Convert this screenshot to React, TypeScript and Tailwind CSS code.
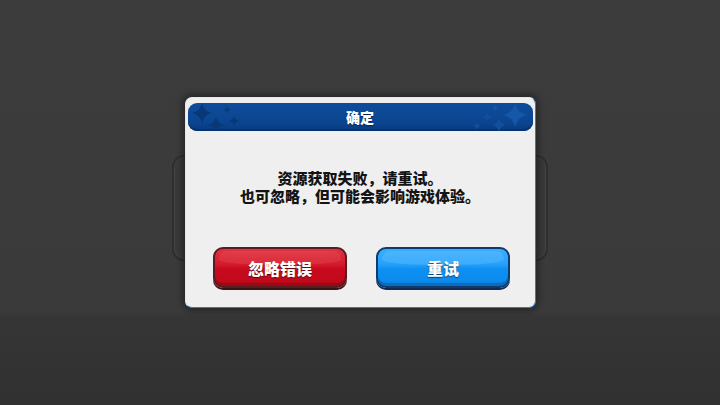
import React from 'react';

const cjk = { fontFamily: '"Noto Sans CJK SC", "Noto Sans", sans-serif' };

// four point sparkle used on the title bar
const Star: React.FC<{ x: number; y: number; r: number; fill: string }> = ({ x, y, r, fill }) => (
  <path
    d={`M${x} ${y - r} Q${x + r * 0.18} ${y - r * 0.18} ${x + r} ${y} Q${x + r * 0.18} ${y + r * 0.18} ${x} ${y + r} Q${x - r * 0.18} ${y + r * 0.18} ${x - r} ${y} Q${x - r * 0.18} ${y - r * 0.18} ${x} ${y - r}Z`}
    fill={fill}
  />
);

const TitleBar: React.FC = () => (
  <div className="relative h-[28px] rounded-[9px] bg-[linear-gradient(to_bottom,#0e4c9a_0%,#0b4590_70%,#073a7c_100%)] overflow-hidden flex items-center justify-center shadow-[inset_0_-2px_0_#06336e]">
    <svg className="absolute left-0 top-0" width="70" height="28" viewBox="0 0 70 28">
      <Star x={14} y={10} r={10} fill="#083876" />
      <Star x={28} y={22} r={8} fill="#083876" />
      <Star x={39} y={7} r={4} fill="#093b7d" />
      <Star x={46} y={18} r={5} fill="#083876" />
    </svg>
    <svg className="absolute right-0 top-0" width="70" height="28" viewBox="0 0 70 28">
      <Star x={52} y={12} r={12} fill="#1557a8" />
      <Star x={36} y={22} r={7} fill="#114e9c" />
      <Star x={24} y={14} r={5} fill="#114e9c" />
      <Star x={32} y={5} r={3} fill="#1557a8" />
      <Star x={14} y={23} r={4} fill="#114e9c" />
    </svg>
    <span className="relative text-[14px] font-black text-white leading-none [text-shadow:0_1px_1px_#02224f]" style={cjk}>
      确定
    </span>
  </div>
);

const GameButton: React.FC<{ label: string; tone: 'red' | 'blue' }> = ({ label, tone }) => {
  const skin =
    tone === 'red'
      ? 'border-[#5b1c20] bg-[linear-gradient(to_bottom,#df3442_0%,#d51c2c_40%,#c70a1e_55%,#c30a1c_85%,#a50716_100%)] shadow-[0_2px_0_#3b1215,inset_0_-3px_0_#9c0814]'
      : 'border-[#0e3b6e] bg-[linear-gradient(to_bottom,#3aaeff_0%,#26a2fb_40%,#0d90f2_55%,#0b8cef_85%,#0a74cc_100%)] shadow-[0_2px_0_#0c2c55,inset_0_-3px_0_#0a6bc0]';
  const glow = tone === 'red' ? 'bg-[#f0707a]/20' : 'bg-[#9ad6ff]/20';
  return (
    <div className={`relative w-[134px] h-[41px] rounded-[10px] border-2 flex items-center justify-center overflow-hidden ${skin}`}>
      <div className={`absolute left-[4px] right-[4px] top-[2px] h-[14px] rounded-t-[8px] rounded-b-[40%] ${glow}`} />
      <span className="relative text-[16px] font-black text-white leading-none [text-shadow:0_1px_1px_rgba(0,0,0,0.55)]" style={cjk}>
        {label}
      </span>
    </div>
  );
};

export default function App() {
  return (
    <div className="w-[720px] h-[405px] overflow-hidden grid place-items-center bg-[linear-gradient(to_bottom,#3c3c3c_0%,#3a3a3a_77%,#353535_78.5%,#313131_100%)]">
      {/* faint panel behind the dialog */}
      <div className="[grid-area:1/1] w-[376px] h-[106px] mt-[11px] rounded-[12px] border-2 border-[#2f2f2f] bg-[#393939] shadow-[inset_0_0_0_1px_#444444]" />

      <div className="[grid-area:1/1] w-[351px] h-[211px] rounded-[7px] bg-[#efefef] border-[1.5px] border-[#3a78c4] border-t-[#dfe9f5] border-l-[#dfe9f5] shadow-[0_0_6px_3px_rgba(0,0,0,0.35)] px-[2px] pt-[5px] flex flex-col">
        <TitleBar />
        <div className="flex flex-col items-center mt-[38px] text-[15px] font-black text-[#141414] leading-[18px]" style={cjk}>
          <p>资源获取失败，请重试。</p>
          <p>也可忽略，但可能会影响游戏体验。</p>
        </div>
        <div className="flex justify-center gap-[29px] mt-[42px] pl-[3px]">
          <GameButton label="忽略错误" tone="red" />
          <GameButton label="重试" tone="blue" />
        </div>
      </div>
    </div>
  );
}
